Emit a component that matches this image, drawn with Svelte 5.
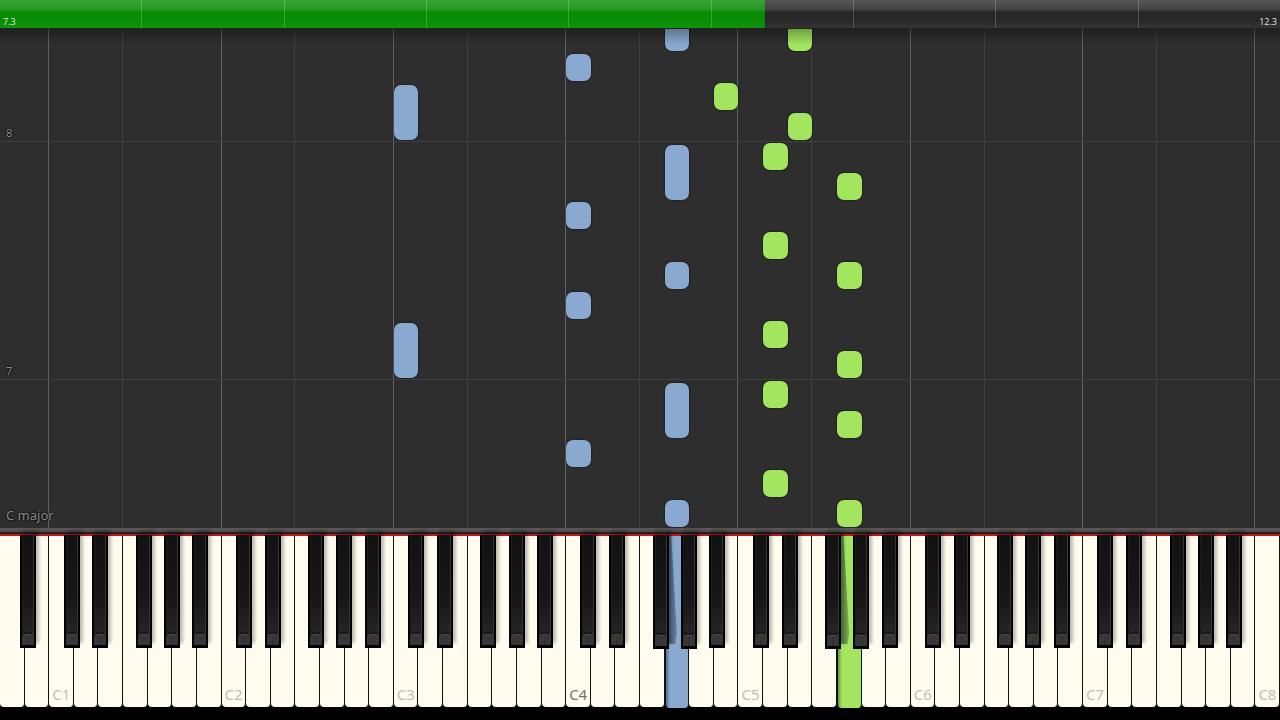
<script>
    const WHITE_KEYS = 52;
    const MEASURE = 238; // px of roll per measure
    const STEPS = 8; // note steps in a measure

    const duration = 12.3;
    let position = $state(7.35);
    let filled = $derived((position / duration) * 100);

    const showTime = (t) => (Math.floor(t * 10) / 10).toFixed(1);

    // left edge of each sharp, measured from the gap it sits on, in key widths
    const sharps = { C: -0.42, D: -0.25, F: -0.48, G: -0.34, A: -0.18 };
    const letters = ["A", "B", "C", "D", "E", "F", "G"];

    const held = { G4: "left", G5: "right" };

    const keys = Array.from({ length: WHITE_KEYS }, (_, i) => {
        const letter = letters[i % 7];
        const octave = Math.floor((i + 5) / 7);
        return { i, letter, name: letter + octave, hand: held[letter + octave] };
    });

    const blackKeys = keys
        .filter((k) => k.letter in sharps && k.i < WHITE_KEYS - 1)
        .map((k) => ({
            name: k.name + "#",
            left: ((k.i + 1 + sharps[k.letter]) / WHITE_KEYS) * 100,
            besideHeld: !!k.hand,
            shade: !!keys[k.i + 1].hand,
        }));

    const guides = keys.filter((k) => k.letter === "C" || k.letter === "F");

    const notes = [
        { key: "G4", step: 0, length: 1, hand: "left" },
        { key: "C4", step: 2, length: 1, hand: "left" },
        { key: "G4", step: 3, length: 2, hand: "left" },
        { key: "C3", step: 5, length: 2, hand: "left" },
        { key: "C4", step: 7, length: 1, hand: "left" },
        { key: "G4", step: 8, length: 1, hand: "left" },
        { key: "C4", step: 10, length: 1, hand: "left" },
        { key: "G4", step: 11, length: 2, hand: "left" },
        { key: "C3", step: 13, length: 2, hand: "left" },
        { key: "C4", step: 15, length: 1, hand: "left" },
        { key: "G4", step: 16, length: 1, hand: "left" },
        { key: "G5", step: 0, length: 1, hand: "right" },
        { key: "D5", step: 1, length: 1, hand: "right" },
        { key: "G5", step: 3, length: 1, hand: "right" },
        { key: "D5", step: 4, length: 1, hand: "right" },
        { key: "G5", step: 5, length: 1, hand: "right" },
        { key: "D5", step: 6, length: 1, hand: "right" },
        { key: "G5", step: 8, length: 1, hand: "right" },
        { key: "D5", step: 9, length: 1, hand: "right" },
        { key: "G5", step: 11, length: 1, hand: "right" },
        { key: "D5", step: 12, length: 1, hand: "right" },
        { key: "E5", step: 13, length: 1, hand: "right" },
        { key: "B4", step: 14, length: 1, hand: "right" },
        { key: "E5", step: 16, length: 1, hand: "right" },
    ];

    const measures = [
        { number: 7, step: 5 },
        { number: 8, step: 13 },
    ];

    const up = (step) => Math.round((step * MEASURE) / STEPS);
    // a note ends a little before the next one starts
    const noteHeight = (length) => up(length) - 1 - 2 * length;
    const across = (i) => (i / WHITE_KEYS) * 100;
    const keyIndex = (name) => keys.findIndex((k) => k.name === name);
</script>

<div class="player">
    <header class="timeline">
        <input
            type="range"
            min="0"
            max={duration}
            step="0.01"
            aria-label="Song position"
            bind:value={position}
            style="--filled: {filled}%"
        />
        <div class="ticks">
            {#each Array(9) as _}
                <span></span>
            {/each}
        </div>
        <div class="times">
            <span>{showTime(position)}</span>
            <span>{showTime(duration)}</span>
        </div>
    </header>

    <main class="roll">
        {#each guides as guide}
            <div
                class="guide"
                class:octave={guide.letter === "C"}
                style="left: {across(guide.i)}%"
            ></div>
        {/each}

        {#each measures as measure}
            <div class="measure" style="bottom: {up(measure.step) - 1}px">
                <span>{measure.number}</span>
            </div>
        {/each}

        {#each notes as note}
            <div
                class="note {note.hand}"
                style="left: {across(keyIndex(note.key))}%; bottom: {up(
                    note.step,
                ) + 1}px; height: {noteHeight(note.length)}px"
            ></div>
        {/each}

        <div class="signature">C major</div>
    </main>

    <div class="ledge"></div>

    <section class="keyboard">
        <div class="white-keys">
            {#each keys as key}
                <button
                    class="white {key.hand ?? ''}"
                    class:middle={key.name === "C4"}
                    aria-label={key.name}
                >
                    {#if key.letter === "C"}{key.name}{/if}
                </button>
            {/each}
        </div>

        {#each blackKeys as key}
            <button
                class="black"
                class:tall={key.besideHeld || key.shade}
                class:shade={key.shade}
                aria-label={key.name}
                style="left: {key.left}%"
            >
                <svg viewBox="0 0 16 114" preserveAspectRatio="none">
                    <defs>
                        <linearGradient id="face" x1="0" y1="0" x2="0" y2="1">
                            <stop offset="0" stop-color="#121212" />
                            <stop offset="0.6" stop-color="#171717" />
                            <stop offset="1" stop-color="#2b2b2b" />
                        </linearGradient>
                    </defs>
                    <rect width="16" height="114" fill="#020202" />
                    <rect x="2" width="12" height="111" fill="url(#face)" />
                    <path d="M2.5 0V110" stroke="#1c1c1c" />
                    <path d="M13.5 0V110" stroke="#363636" />
                    <path
                        d="M2 111V102L4 100H12L14 102V111Z"
                        fill="#373737"
                    />
                    <path
                        d="M3 97L5 99H11L13 97"
                        fill="none"
                        stroke="#0c0c0c"
                    />
                    <path d="M5 100.5H11" stroke="#4c4c4c" />
                    <path d="M8 102V111" stroke="#2e2e2e" />
                </svg>
            </button>
        {/each}
    </section>
</div>

<style>
    :global(body) {
        margin: 0;
        background: #000;
    }

    .player {
        display: flex;
        flex-direction: column;
        min-height: 100vh;
        font-family: "Noto Sans", "Open Sans", sans-serif;
        overflow: hidden;
    }

    /* timeline */
    .timeline {
        position: relative;
        height: 28px;
        border-bottom: 1px solid #222;
    }

    .timeline input {
        appearance: none;
        display: block;
        width: 100%;
        height: 100%;
        margin: 0;
        cursor: pointer;
        background:
            linear-gradient(
                    #35a435,
                    #229722 10px,
                    #088c04 12px,
                    #088c04 20px,
                    #109410
                )
                0 0 / var(--filled) 100% no-repeat,
            linear-gradient(
                #585858,
                #404040 10px,
                #272727 12px,
                #272727 20px,
                #343434
            );
    }

    .timeline input::-webkit-slider-thumb {
        appearance: none;
        width: 1px;
        height: 28px;
        opacity: 0;
    }

    .ticks,
    .times {
        position: absolute;
        inset: 0;
        display: flex;
        pointer-events: none;
    }

    .ticks span {
        flex: 1;
        box-sizing: border-box;
        border-right: 1px solid rgba(255, 255, 255, 0.2);
    }

    .ticks span:last-child {
        border-right: none;
    }

    .times {
        justify-content: space-between;
        align-items: flex-end;
        padding: 0 3px;
        color: #e4e4e4;
        font-family: "Open Sans", sans-serif;
        font-size: 9px;
        line-height: 12px;
    }

    /* falling notes */
    .roll {
        position: relative;
        flex: 1;
        overflow: hidden;
        background: #2e2e2e;
    }

    .roll::after {
        content: "";
        position: absolute;
        inset: 0 0 auto;
        height: 16px;
        background: linear-gradient(rgba(0, 0, 0, 0.3), transparent);
    }

    .guide {
        position: absolute;
        top: 0;
        bottom: 0;
        width: 1px;
        margin-left: -1px;
        background: #404040;
    }

    .guide.octave {
        background: #626262;
    }

    .measure {
        position: absolute;
        left: 0;
        right: 0;
        border-bottom: 1px solid #404040;
    }

    .measure span {
        display: block;
        padding-left: 6px;
        color: #8c8c8c;
        font-size: 11px;
        line-height: 16px;
        text-shadow: 0 0 2px #000, 0 0 2px #000;
    }

    .note {
        position: absolute;
        width: calc(100% / 52);
        border-radius: 7px;
        box-shadow: 0 0 2px rgba(0, 0, 0, 0.8);
    }

    .left {
        background-color: #89a9d0;
    }

    .right {
        background-color: #a3e55f;
    }

    .signature {
        position: absolute;
        left: 6px;
        bottom: 4px;
        color: #8c8c8c;
        font-size: 13px;
        line-height: 18px;
        text-shadow: 0 0 2px #000, 0 0 2px #000;
    }

    .ledge {
        height: 6px;
        background: linear-gradient(#5a5a5a, #505053 3px, #2a1a1c 5px, #200808);
    }

    /* keyboard */
    .keyboard {
        position: relative;
        height: 173px;
        padding-bottom: 13px;
        background: #000;
    }

    .white-keys {
        display: grid;
        grid-template-columns: repeat(52, 1fr);
        height: 100%;
        box-sizing: border-box;
        border-top: 2px solid #b51c20;
    }

    button {
        margin: 0;
        padding: 0;
        border: none;
        font-family: inherit;
        cursor: pointer;
    }

    .white {
        display: flex;
        flex-direction: column;
        justify-content: flex-end;
        padding: 0 0 4px 3px;
        border-right: 1px solid #111;
        border-radius: 0 0 4px 4px;
        background: #fffbef;
        color: #c3beb3;
        font-size: 15px;
        line-height: 18px;
        text-align: left;
        white-space: nowrap;
    }

    .white.middle {
        color: #77736c;
    }

    .white.left,
    .white.right {
        margin-bottom: -1px;
        border-left: 1px solid #111;
        background: linear-gradient(90deg, rgba(0, 0, 0, 0.35), transparent 4px)
            #89a9d0;
    }

    .white.right {
        background-color: #a3e55f;
    }

    .black {
        position: absolute;
        top: 1px;
        width: 16px;
        height: 113px;
        background: #000;
        box-shadow: 3px -5px 3px rgba(0, 0, 0, 0.25);
    }

    .black.tall {
        height: 114px;
    }

    .black.shade::after {
        content: "";
        position: absolute;
        top: 0;
        left: 100%;
        width: 8px;
        height: 109px;
        background: linear-gradient(
            90deg,
            rgba(20, 30, 40, 0.5),
            rgba(20, 30, 40, 0.3)
        );
        clip-path: polygon(0 0, 30% 0, 100% 90%, 80% 100%, 0 100%);
    }

    .black svg {
        display: block;
        width: 100%;
        height: 100%;
    }
</style>
